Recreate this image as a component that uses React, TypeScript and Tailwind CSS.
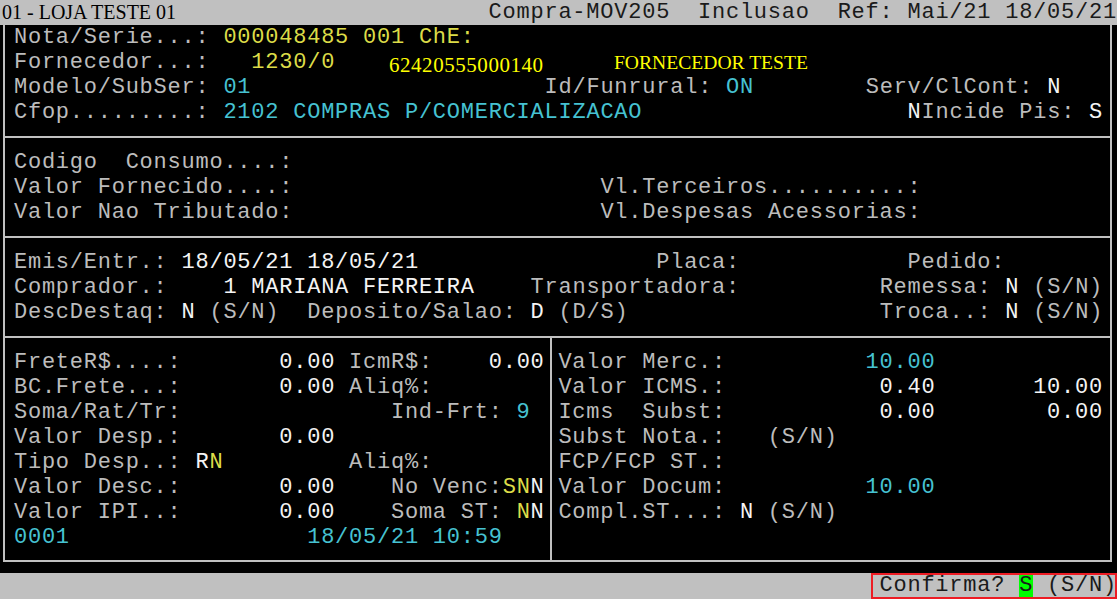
import React from "react";

type K = "g" | "w" | "y" | "c";
type Seg = [number, string, K];

const C: Record<K, string> = {
  g: "text-[#bcbcbc]",
  w: "text-[#f4f4f4]",
  y: "text-[#dcdc48]",
  c: "text-[#46c2d2]",
};

function Segs({ segs, start }: { segs: Seg[]; start: number }) {
  const out: React.ReactNode[] = [];
  let col = start;
  segs.forEach(([c, t, k], i) => {
    if (c > col) out.push(<span key={"s" + i}>{" ".repeat(c - col)}</span>);
    out.push(
      <span key={i} className={C[k]}>
        {t}
      </span>
    );
    col = c + t.length;
  });
  return <>{out}</>;
}

function Line({ segs = [], start }: { segs?: Seg[]; start: number }) {
  return (
    <div className="h-[25px] leading-[26px] whitespace-pre">
      <Segs segs={segs} start={start} />
    </div>
  );
}

const leftRows: Seg[][] = [
  [[1, "FreteR$....:", "g"], [20, "0.00", "w"], [25, "IcmR$:", "g"], [35, "0.00", "w"]],
  [[1, "BC.Frete...:", "g"], [20, "0.00", "w"], [25, "Aliq%:", "g"]],
  [[1, "Soma/Rat/Tr:", "g"], [28, "Ind-Frt:", "g"], [37, "9", "c"]],
  [[1, "Valor Desp.:", "g"], [20, "0.00", "w"]],
  [[1, "Tipo Desp..:", "g"], [14, "R", "w"], [15, "N", "y"], [25, "Aliq%:", "g"]],
  [[1, "Valor Desc.:", "g"], [20, "0.00", "w"], [28, "No Venc:", "g"], [36, "SN", "y"], [38, "N", "w"]],
  [[1, "Valor IPI..:", "g"], [20, "0.00", "w"], [28, "Soma ST:", "g"], [37, "N", "y"], [38, "N", "w"]],
  [[1, "0001", "c"], [22, "18/05/21 10:59", "c"]],
];

const rightRows: Seg[][] = [
  [[40, "Valor Merc.:", "g"], [62, "10.00", "c"]],
  [[40, "Valor ICMS.:", "g"], [63, "0.40", "w"], [74, "10.00", "w"]],
  [[40, "Icms  Subst:", "g"], [63, "0.00", "w"], [75, "0.00", "w"]],
  [[40, "Subst Nota.:", "g"], [55, "(S/N)", "g"]],
  [[40, "FCP/FCP ST.:", "g"]],
  [[40, "Valor Docum:", "g"], [62, "10.00", "c"]],
  [[40, "Compl.ST...:", "g"], [53, "N", "w"], [55, "(S/N)", "g"]],
  [],
];

export default function App() {
  return (
    <div className="w-[1117px] h-[599px] bg-black overflow-hidden font-['Liberation_Mono',monospace] text-[22px] tracking-[0.76px]">
      {/* Title bar */}
      <div className="h-[25px] bg-[#c0c0c0] flex items-center whitespace-pre">
        <span className="w-[488.6px] shrink-0 pl-[2px] font-['Liberation_Serif',serif] text-[20px] tracking-normal text-black leading-[25px]">
          01 - LOJA TESTE 01
        </span>
        <span className="text-[#1a1a1a] leading-[25px]">Compra-MOV205  Inclusao  Ref: Mai/21 18/05/21</span>
      </div>

      {/* Body box */}
      <div className="ml-[3px] w-[1109px] h-[537px] border-x-2 border-b-2 border-[#c0c0c0] flex flex-col">
        <div className="h-[113px] shrink-0 border-b-2 border-[#c0c0c0] pl-[8.96px]">
          <Line start={1} segs={[[1, "Nota/Serie...:", "g"], [16, "000048485 001 ChE:", "y"]]} />
          <div className="h-[25px] flex items-center whitespace-pre">
            <span className="w-[375px] shrink-0 leading-[26px]">
              <Segs start={1} segs={[[1, "Fornecedor...:", "g"], [18, "1230/0", "y"]]} />
            </span>
            <span className="w-[225px] shrink-0 pt-[5px] font-['Liberation_Serif',serif] text-[21px] tracking-[0.55px] text-[#ffff00] leading-[21px]">
              62420555000140
            </span>
            <span className="font-['Liberation_Serif',serif] text-[19.6px] tracking-normal text-[#ffff00] leading-[20px]">
              FORNECEDOR TESTE
            </span>
          </div>
          <Line
            start={1}
            segs={[
              [1, "Modelo/SubSer:", "g"],
              [16, "01", "c"],
              [39, "Id/Funrural:", "g"],
              [52, "ON", "c"],
              [62, "Serv/ClCont:", "g"],
              [75, "N", "w"],
            ]}
          />
          <Line
            start={1}
            segs={[
              [1, "Cfop.........:", "g"],
              [16, "2102 COMPRAS P/COMERCIALIZACAO", "c"],
              [65, "N", "w"],
              [66, "Incide Pis:", "g"],
              [78, "S", "w"],
            ]}
          />
        </div>

        <div className="h-[100px] shrink-0 border-b-2 border-[#c0c0c0] pt-[12px] pl-[8.96px]">
          <Line start={1} segs={[[1, "Codigo  Consumo....:", "g"]]} />
          <Line start={1} segs={[[1, "Valor Fornecido....:", "g"], [43, "Vl.Terceiros..........:", "g"]]} />
          <Line start={1} segs={[[1, "Valor Nao Tributado:", "g"], [43, "Vl.Despesas Acessorias:", "g"]]} />
        </div>

        <div className="h-[100px] shrink-0 border-b-2 border-[#c0c0c0] pt-[12px] pl-[8.96px]">
          <Line
            start={1}
            segs={[
              [1, "Emis/Entr.:", "g"],
              [13, "18/05/21 18/05/21", "w"],
              [47, "Placa:", "g"],
              [65, "Pedido:", "g"],
            ]}
          />
          <Line
            start={1}
            segs={[
              [1, "Comprador.:", "g"],
              [16, "1 MARIANA FERREIRA", "w"],
              [38, "Transportadora:", "g"],
              [63, "Remessa:", "g"],
              [72, "N", "w"],
              [74, "(S/N)", "g"],
            ]}
          />
          <Line
            start={1}
            segs={[
              [1, "DescDestaq:", "g"],
              [13, "N", "w"],
              [15, "(S/N)", "g"],
              [22, "Deposito/Salao:", "g"],
              [38, "D", "w"],
              [40, "(D/S)", "g"],
              [63, "Troca..:", "g"],
              [72, "N", "w"],
              [74, "(S/N)", "g"],
            ]}
          />
        </div>

        <div className="flex-1 flex">
          <div className="w-[547px] shrink-0 border-r-2 border-[#c0c0c0] pt-[12px] pl-[8.96px]">
            {leftRows.map((r, i) => (
              <Line key={i} start={1} segs={r} />
            ))}
          </div>
          <div className="flex-1 pt-[12px] pl-[6.4px]">
            {rightRows.map((r, i) => (
              <Line key={i} start={40} segs={r} />
            ))}
          </div>
        </div>
      </div>

      <div className="h-[11px]" />

      {/* Status bar */}
      <div className="h-[26px] bg-[#c0c0c0] flex justify-end">
        <div className="w-[246px] h-[26px] border-2 border-[#ed1c24] flex items-stretch pl-[6.5px] whitespace-pre text-[#1a1a1a] leading-[22px]">
          <span className="flex items-center">Confirma? </span>
          <span className="flex items-center bg-[#00ff00]">S</span>
          <span className="flex items-center"> (S/N)</span>
        </div>
      </div>
    </div>
  );
}
